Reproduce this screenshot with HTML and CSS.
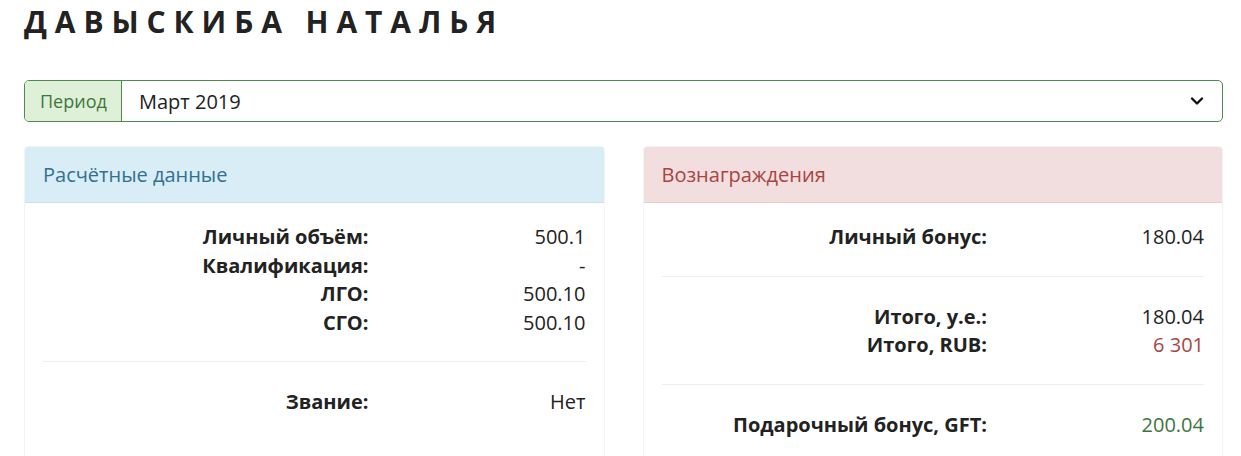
FILE: index.html
```html
<!DOCTYPE html>
<html lang="ru">
<head>
  <meta charset="UTF-8" />
  <title>Давыскиба Наталья</title>
  <link rel="stylesheet" href="styles.css">
</head>
<body>
  <div class="page">
    <h1 class="person-name">Давыскиба Наталья</h1>

    <div class="period-group">
      <span class="period-label">Период</span>
      <div class="period-select">
        <span>Март 2019</span>
        <svg class="chevron" width="14" height="10" viewBox="0 0 14 10">
          <path d="M2 2.5 L7 7.5 L12 2.5" fill="none" stroke="#111" stroke-width="2.4" stroke-linecap="round" stroke-linejoin="round"/>
        </svg>
      </div>
    </div>

    <div class="panels">
      <div class="panel panel-info">
        <div class="panel-heading">Расчётные данные</div>
        <div class="panel-body">
          <div class="data-block">
            <div class="data-row"><span class="label">Личный объём:</span><span class="value">500.1</span></div>
            <div class="data-row"><span class="label">Квалификация:</span><span class="value">-</span></div>
            <div class="data-row"><span class="label">ЛГО:</span><span class="value">500.10</span></div>
            <div class="data-row"><span class="label">СГО:</span><span class="value">500.10</span></div>
          </div>
          <hr>
          <div class="data-block">
            <div class="data-row"><span class="label">Звание:</span><span class="value">Нет</span></div>
          </div>
        </div>
      </div>

      <div class="panel panel-danger">
        <div class="panel-heading">Вознаграждения</div>
        <div class="panel-body">
          <div class="data-block">
            <div class="data-row"><span class="label">Личный бонус:</span><span class="value">180.04</span></div>
          </div>
          <hr>
          <div class="data-block">
            <div class="data-row"><span class="label">Итого, у.е.:</span><span class="value">180.04</span></div>
            <div class="data-row"><span class="label">Итого, RUB:</span><span class="value text-red">6 301</span></div>
          </div>
          <hr>
          <div class="data-block">
            <div class="data-row"><span class="label">Подарочный бонус, GFT:</span><span class="value text-green">200.04</span></div>
          </div>
        </div>
      </div>
    </div>
  </div>
</body>
</html>
```

FILE: styles.css
```css
* {
  box-sizing: border-box;
}

body, html {
  margin: 0;
  font-family: "Open Sans", Arial, sans-serif;
  background-color: #fff;
  color: #222;
}

.page {
  padding: 0 18px 0 24px;
}

.person-name {
  margin: 0;
  padding-top: 2px;
  font-size: 30px;
  line-height: 40px;
  font-weight: 700;
  letter-spacing: 7.9px;
  text-transform: uppercase;
  color: #222;
}

.period-group {
  display: flex;
  margin-top: 38px;
  height: 42px;
  border: 1px solid #4f8a4f;
  border-radius: 5px;
  overflow: hidden;
}

.period-label {
  display: flex;
  align-items: center;
  padding: 0 15px;
  width: 97px;
  background-color: #dff0d8;
  color: #3c763d;
  font-size: 18px;
  border-right: 1px solid #4f8a4f;
}

.period-select {
  flex: 1;
  display: flex;
  align-items: center;
  justify-content: space-between;
  padding: 0 18px 0 17px;
  font-size: 20px;
  color: #222;
}

.chevron {
  display: block;
}

.panels {
  display: grid;
  grid-template-columns: 1fr 1fr;
  gap: 38px;
  margin-top: 24px;
}

.panel {
  border: 1px solid #f3f3f3;
  border-radius: 4px;
  overflow: hidden;
}

.panel-heading {
  height: 56px;
  padding: 0 18px;
  display: flex;
  align-items: center;
  font-size: 20px;
}

.panel-info .panel-heading {
  background-color: #d9edf7;
  color: #31708f;
  border-bottom: 1px solid #c6e2ee;
}

.panel-danger .panel-heading {
  background-color: #f2dede;
  color: #a94442;
  border-bottom: 1px solid #ebcccc;
}

.panel-body {
  padding: 20px 18px 20px;
}

.data-row {
  display: flex;
  font-size: 20px;
  line-height: 28.5px;
}

.data-row .label {
  width: 60%;
  text-align: right;
  font-weight: 700;
}

.data-row .value {
  width: 40%;
  text-align: right;
}

.panel-body hr {
  border: none;
  border-top: 1px solid #eee;
  margin: 24px 0 26px;
}

.text-red {
  color: #a94442;
}

.text-green {
  color: #3c763d;
}
```
